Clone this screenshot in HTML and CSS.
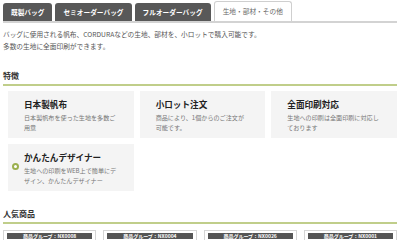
FILE: index.html
```html
<!DOCTYPE html>
<html lang="ja">
<head>
    <meta charset="UTF-8">
    <meta name="viewport" content="width=device-width, initial-scale=1.0">
    <title>生地・部材・その他</title>
    <link rel="stylesheet" href="styles.css">
</head>
<body>

    <div class="tabs">
        <div class="tab">既製バッグ</div>
        <div class="tab">セミオーダーバッグ</div>
        <div class="tab">フルオーダーバッグ</div>
        <div class="tab active">生地・部材・その他</div>
    </div>

    <p class="lead">バッグに使用される帆布、CORDURAなどの生地、部材を、小ロットで購入可能です。<br>多数の生地に全面印刷ができます。</p>

    <h2 class="section-title">特徴</h2>
    <div class="features">
        <div class="feature">
            <div class="feature-title">日本製帆布</div>
            <div class="feature-desc">日本製帆布を使った生地を多数ご用意</div>
        </div>
        <div class="feature">
            <div class="feature-title">小ロット注文</div>
            <div class="feature-desc">商品により、1個からのご注文が可能です。</div>
        </div>
        <div class="feature">
            <div class="feature-title">全面印刷対応</div>
            <div class="feature-desc">生地への印刷は全面印刷に対応しております</div>
        </div>
        <div class="feature">
            <span class="bullet"></span>
            <div class="feature-title">かんたんデザイナー</div>
            <div class="feature-desc">生地への印刷をWEB上で簡単にデザイン、かんたんデザイナー</div>
        </div>
    </div>

    <h2 class="section-title popular">人気商品</h2>
    <div class="products">
        <div class="product"><div class="product-label">商品グループ：NX0008</div></div>
        <div class="product"><div class="product-label">商品グループ：NX0004</div></div>
        <div class="product"><div class="product-label">商品グループ：NX0026</div></div>
        <div class="product"><div class="product-label">商品グループ：NX0001</div></div>
    </div>

</body>
</html>
```

FILE: styles.css
```css
body {
    margin: 0;
    padding: 0 3px;
    font-family: "Noto Sans CJK JP", "Liberation Sans", sans-serif;
    color: #555;
    background: #fff;
}
.tabs {
    display: flex;
    align-items: flex-end;
    gap: 3px;
    padding-top: 1px;
    border-bottom: 2px solid #d3d3d3;
}
.tab {
    height: 18px;
    line-height: 18px;
    padding: 0 8px;
    font-size: 6.7px;
    font-weight: bold;
    color: #fff;
    background: #585858;
    border-radius: 3px 3px 0 0;
}
.tab.active {
    height: 19px;
    line-height: 19px;
    background: #fff;
    color: #666;
    font-weight: normal;
    border: 1px solid #cfcfcf;
    border-bottom: none;
}
.lead {
    margin: 5px 0 0;
    font-size: 6.7px;
    line-height: 12px;
}
.section-title {
    margin: 18px 0 0;
    padding-bottom: 2px;
    font-size: 8px;
    line-height: 12px;
    color: #333;
    border-bottom: 2px solid #c0ce8a;
}
.section-title.popular { margin-top: 17px; }
.features {
    display: grid;
    grid-template-columns: repeat(3, 1fr);
    gap: 6px;
    margin-top: 5px;
    padding-left: 5px;
}
.feature {
    position: relative;
    background: #f4f4f4;
    padding: 7px 16px 5px;
}
.feature-title {
    font-size: 8.6px;
    font-weight: bold;
    line-height: 12px;
    color: #222;
    margin-bottom: 3px;
}
.feature-desc {
    font-size: 6.1px;
    line-height: 10px;
    color: #777;
}
.bullet {
    position: absolute;
    left: 4px;
    top: 19px;
    width: 3px;
    height: 3px;
    border: 2px solid #9bb04f;
    border-radius: 50%;
    background: #fff;
}
.products {
    display: grid;
    grid-template-columns: repeat(4, 1fr);
    gap: 7px;
    margin-top: 6px;
}
.product {
    height: 40px;
    padding: 2px 3px;
    border: 1px solid #d5d5d5;
}
.product-label {
    background: #555;
    color: #fff;
    font-size: 5px;
    font-weight: bold;
    line-height: 6px;
    text-align: center;
}
```
